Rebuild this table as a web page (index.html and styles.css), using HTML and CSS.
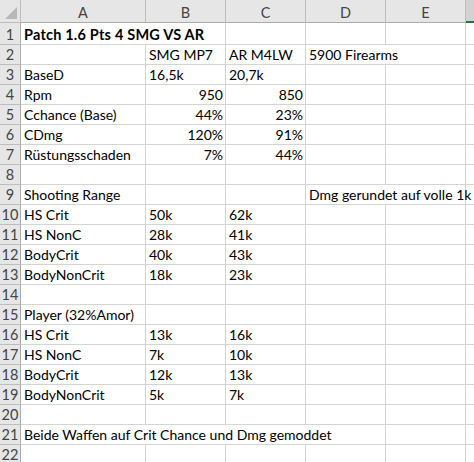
FILE: index.html
```html
<!DOCTYPE html>
<html>
<head>
<meta charset="utf-8">
<link rel="stylesheet" href="styles.css">
</head>
<body>
<div class="sheet">
  <div class="corner"><span class="tri"></span></div>
  <div class="ch">A</div><div class="ch">B</div><div class="ch">C</div><div class="ch">D</div><div class="ch">E</div><div class="ch sel"></div>

  <div class="rh r1">1</div><div class="c r1 span2 bold">Patch 1.6 Pts 4 SMG VS AR</div><div class="c r1"></div><div class="c r1"></div><div class="c r1"></div><div class="c r1 f"></div>

  <div class="rh">2</div><div class="c"></div><div class="c">SMG MP7</div><div class="c">AR M4LW</div><div class="c span2">5900 Firearms</div><div class="c f"></div>

  <div class="rh">3</div><div class="c">BaseD</div><div class="c">16,5k</div><div class="c">20,7k</div><div class="c"></div><div class="c"></div><div class="c f"></div>

  <div class="rh">4</div><div class="c">Rpm</div><div class="c num">950</div><div class="c num">850</div><div class="c"></div><div class="c"></div><div class="c f"></div>

  <div class="rh">5</div><div class="c">Cchance (Base)</div><div class="c num">44%</div><div class="c num">23%</div><div class="c"></div><div class="c"></div><div class="c f"></div>

  <div class="rh">6</div><div class="c">CDmg</div><div class="c num">120%</div><div class="c num">91%</div><div class="c"></div><div class="c"></div><div class="c f"></div>

  <div class="rh">7</div><div class="c">Rüstungsschaden</div><div class="c num">7%</div><div class="c num">44%</div><div class="c"></div><div class="c"></div><div class="c f"></div>

  <div class="rh">8</div><div class="c"></div><div class="c"></div><div class="c"></div><div class="c"></div><div class="c"></div><div class="c f"></div>

  <div class="rh">9</div><div class="c">Shooting Range</div><div class="c"></div><div class="c"></div><div class="c span2 over">Dmg gerundet auf volle 1k</div><div class="c f"></div>

  <div class="rh">10</div><div class="c">HS Crit</div><div class="c">50k</div><div class="c">62k</div><div class="c"></div><div class="c"></div><div class="c f"></div>

  <div class="rh">11</div><div class="c">HS NonC</div><div class="c">28k</div><div class="c">41k</div><div class="c"></div><div class="c"></div><div class="c f"></div>

  <div class="rh">12</div><div class="c">BodyCrit</div><div class="c">40k</div><div class="c">43k</div><div class="c"></div><div class="c"></div><div class="c f"></div>

  <div class="rh">13</div><div class="c">BodyNonCrit</div><div class="c">18k</div><div class="c">23k</div><div class="c"></div><div class="c"></div><div class="c f"></div>

  <div class="rh">14</div><div class="c"></div><div class="c"></div><div class="c"></div><div class="c"></div><div class="c"></div><div class="c f"></div>

  <div class="rh">15</div><div class="c">Player (32%Amor)</div><div class="c"></div><div class="c"></div><div class="c"></div><div class="c"></div><div class="c f"></div>

  <div class="rh">16</div><div class="c">HS Crit</div><div class="c">13k</div><div class="c">16k</div><div class="c"></div><div class="c"></div><div class="c f"></div>

  <div class="rh">17</div><div class="c">HS NonC</div><div class="c">7k</div><div class="c">10k</div><div class="c"></div><div class="c"></div><div class="c f"></div>

  <div class="rh">18</div><div class="c">BodyCrit</div><div class="c">12k</div><div class="c">13k</div><div class="c"></div><div class="c"></div><div class="c f"></div>

  <div class="rh">19</div><div class="c">BodyNonCrit</div><div class="c">5k</div><div class="c">7k</div><div class="c"></div><div class="c"></div><div class="c f"></div>

  <div class="rh">20</div><div class="c"></div><div class="c"></div><div class="c"></div><div class="c"></div><div class="c"></div><div class="c f"></div>

  <div class="rh">21</div><div class="c span4">Beide Waffen auf Crit Chance und Dmg gemoddet</div><div class="c"></div><div class="c f"></div>

  <div class="rh">22</div><div class="c"></div><div class="c"></div><div class="c"></div><div class="c"></div><div class="c"></div><div class="c f"></div>
</div>
</body>
</html>
```

FILE: styles.css
```css
html, body {
  margin: 0;
  padding: 0;
  background: #ffffff;
  overflow: hidden;
}
.sheet {
  display: grid;
  grid-template-columns: 21px 125px 80px 80px 80px 80px 9px;
  grid-template-rows: 23px 22px repeat(21, 20px);
  font-family: Lato, "Open Sans", sans-serif;
  font-size: 14px;
  color: #000;
  width: 474px;
}
.corner {
  background: #e6e6e6;
  border-right: 1px solid #bdbdbd;
  border-bottom: 1px solid #bdbdbd;
  position: relative;
}
.tri {
  position: absolute;
  right: 3px;
  bottom: 3px;
  width: 0;
  height: 0;
  border-left: 12px solid transparent;
  border-bottom: 12px solid #b8b8b8;
}
.ch {
  background: #e6e6e6;
  border-right: 1px solid #bdbdbd;
  border-bottom: 1px solid #ababab;
  color: #444;
  display: flex;
  align-items: center;
  justify-content: center;
  padding-top: 2px;
  font-size: 14.5px;
}
.ch.sel {
  background: #d2d2d2;
  border-bottom: 2px solid #217346;
  border-right: none;
}
.rh {
  background: #e6e6e6;
  border-right: 1px solid #ababab;
  border-bottom: 1px solid #bdbdbd;
  color: #444;
  display: flex;
  align-items: flex-end;
  justify-content: center;
  line-height: 18px;
  font-size: 14.5px;
}
.c {
  border-right: 1px solid #d4d4d4;
  border-bottom: 1px solid #d4d4d4;
  display: flex;
  align-items: flex-end;
  padding: 0 2px 0 3px;
  line-height: 18px;
  white-space: nowrap;
  overflow: hidden;
}
.c.over {
  overflow: visible;
}
.c.f {
  border-right: none;
}
.num {
  justify-content: flex-end;
}
.bold {
  font-weight: bold;
  font-size: 14.5px;
  letter-spacing: 0.2px;
}
.span2 {
  grid-column: span 2;
}
.span4 {
  grid-column: span 4;
}
```
